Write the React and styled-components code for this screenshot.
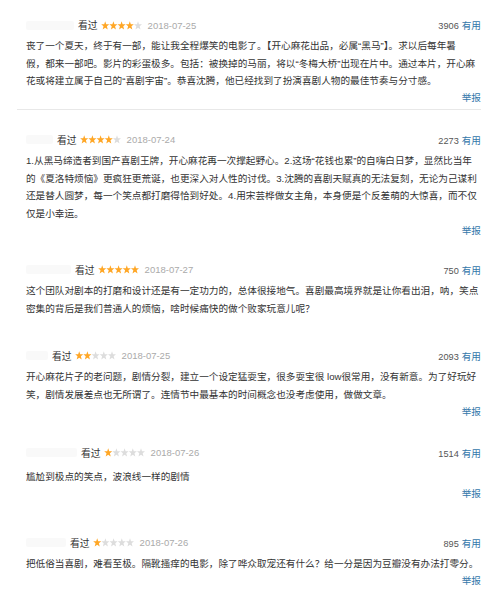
import React from "react";
import styled, { createGlobalStyle } from "styled-components";

const Global = createGlobalStyle`
  html, body { margin: 0; padding: 0; background: #fff; }
  body { font-family: "Liberation Sans", "Noto Sans CJK SC", sans-serif; }
`;

const List = styled.div`
  padding: 0 16px 0 17px;
`;

const Review = styled.article`
  padding: ${(p) => p.$top}px 0 4px 9px;
  border-bottom: 1px solid ${(p) => (p.$divider ? "#e8e8e8" : "transparent")};
`;

const Header = styled.div`
  display: flex;
  align-items: center;
  height: 16px;
`;

const Name = styled.span`
  width: ${(p) => p.$w}px;
  height: 9px;
  margin-right: 4px;
  background: #f9f9f9;
  border-radius: 2px;
`;

const Watched = styled.span`
  font-size: 9.8px;
  color: #333;
`;

const StarRow = styled.svg`
  margin-left: 3px;
  display: block;
`;

const DateText = styled.span`
  margin-left: 6px;
  font-size: 9.5px;
  color: #aaa;
`;

const Votes = styled.span`
  margin-left: auto;
  font-size: 9.2px;
  color: #555;
`;

const Useful = styled.span`
  margin-left: 3px;
  font-size: 9.65px;
  color: #37a;
`;

const Body = styled.p`
  margin: ${(p) => p.$gap}px 0 0;
  font-size: 9.65px;
  line-height: 17.6px;
  color: #333;
  white-space: pre-line;
`;

const Actions = styled.div`
  display: flex;
  justify-content: flex-end;
  margin-top: 2.5px;
  font-size: 9.65px;
  line-height: 12.4px;
  color: #37a;
`;

const STAR = "5,0.3 6.2,3.6 9.8,3.7 7,5.9 8,9.4 5,7.4 2,9.4 3,5.9 0.2,3.7 3.8,3.6";

function Stars({ n }) {
  return (
    <StarRow width="41" height="9" viewBox="0 0 41 9">
      {[0, 1, 2, 3, 4].map((i) => (
        <polygon
          key={i}
          points={STAR}
          transform={`translate(${i * 8.2} 0) scale(0.84 0.9)`}
          fill={i < n ? "#ffa726" : "#dddddd"}
        />
      ))}
    </StarRow>
  );
}

const reviews = [
  {
    name: 48,
    stars: 4,
    date: "2018-07-25",
    votes: 3906,
    top: 17,
    gap: 4.2,
    divider: true,
    report: true,
    text:
      "丧了一个夏天，终于有一部，能让我全程爆笑的电影了。【开心麻花出品，必属\u201C黑马\u201D】。求以后每年暑\n假，都来一部吧。影片的彩蛋极多。包括：被换掉的马丽，将以\u201C冬梅大桥\u201D出现在片中。通过本片，开心麻\n花或将建立属于自己的\u201C喜剧宇宙\u201D。恭喜沈腾，他已经找到了扮演喜剧人物的最佳节奏与分寸感。",
  },
  {
    name: 27,
    stars: 4,
    date: "2018-07-24",
    votes: 2273,
    top: 22.1,
    gap: 4.2,
    report: true,
    text:
      "1.从黑马缔造者到国产喜剧王牌，开心麻花再一次撑起野心。2.这场\u201C花钱也累\u201D的自嗨白日梦，显然比当年\n的《夏洛特烦恼》更疯狂更荒诞，也更深入对人性的讨伐。3.沈腾的喜剧天赋真的无法复刻，无论为己谋利\n还是替人圆梦，每一个笑点都打磨得恰到好处。4.用宋芸桦做女主角，本身便是个反差萌的大惊喜，而不仅\n仅是小幸运。",
  },
  {
    name: 45,
    stars: 5,
    date: "2018-07-27",
    votes: 750,
    top: 19.5,
    gap: 4.2,
    report: false,
    text:
      "这个团队对剧本的打磨和设计还是有一定功力的，总体很接地气。喜剧最高境界就是让你看出泪，呐，笑点\n密集的背后是我们普通人的烦恼，啥时候痛快的做个败家玩意儿呢？",
  },
  {
    name: 22,
    stars: 2,
    date: "2018-07-25",
    votes: 2093,
    top: 25.6,
    gap: 4.2,
    report: true,
    text:
      "开心麻花片子的老问题，剧情分裂，建立一个设定猛耍宝，很多耍宝很 low很常用，没有新意。为了好玩好\n笑，剧情发展差点也无所谓了。连情节中最基本的时间概念也没考虑使用，做做文章。",
  },
  {
    name: 51,
    stars: 1,
    date: "2018-07-26",
    votes: 1514,
    top: 21.7,
    gap: 6.7,
    report: true,
    text: "尴尬到极点的笑点，波浪线一样的剧情",
  },
  {
    name: 40,
    stars: 1,
    date: "2018-07-26",
    votes: 895,
    top: 29.8,
    gap: 4.2,
    report: true,
    text: "把低俗当喜剧，难看至极。隔靴搔痒的电影，除了哗众取宠还有什么？给一分是因为豆瓣没有办法打零分。",
  },
];

export default function App() {
  return (
    <>
      <Global />
      <List>
        {reviews.map((r, i) => (
          <Review key={i} $top={r.top} $divider={r.divider}>
            <Header>
              <Name $w={r.name} />
              <Watched>看过</Watched>
              <Stars n={r.stars} />
              <DateText>{r.date}</DateText>
              <Votes>
                {r.votes}
                <Useful>有用</Useful>
              </Votes>
            </Header>
            <Body $gap={r.gap}>{r.text}</Body>
            {r.report && <Actions>举报</Actions>}
          </Review>
        ))}
      </List>
    </>
  );
}
